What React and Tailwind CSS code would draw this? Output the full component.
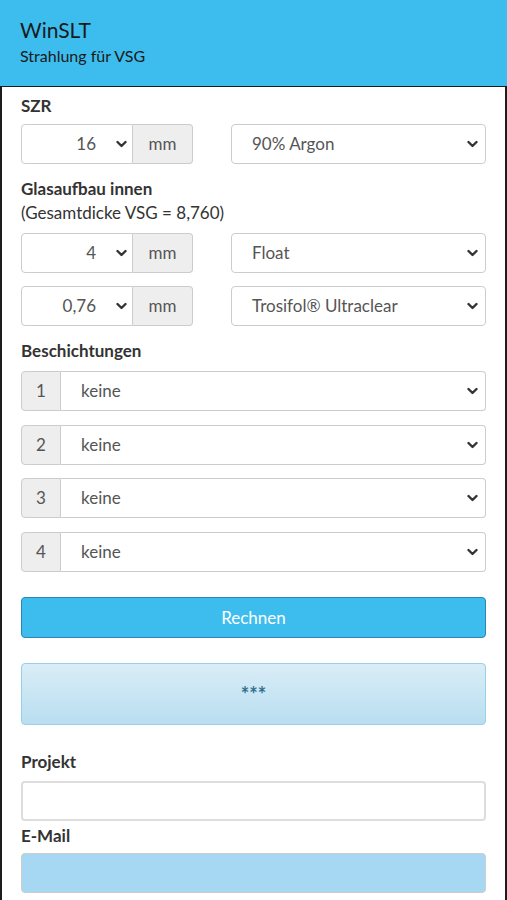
function Chevron() {
	return (
		<svg width="11" height="8" viewBox="0 0 11 8" className="shrink-0">
			<polyline points="1.5,2 5.5,6 9.5,2" fill="none" stroke="#333" strokeWidth="2.4" strokeLinecap="round" strokeLinejoin="round" />
		</svg>
	);
}

function UnitSelect({ value }) {
	return (
		<div className="flex h-10 w-[172px]">
			<div className="flex flex-1 items-center justify-end gap-[20px] pr-[5px] border border-[#ccc] rounded-l-[4px] bg-white">
				<span>{value}</span>
				<Chevron />
			</div>
			<div className="flex w-[60px] items-center justify-center border border-l-0 border-[#ccc] rounded-r-[4px] bg-[#eee]">mm</div>
		</div>
	);
}

function WideSelect({ value }) {
	return (
		<div className="flex h-10 flex-1 items-center justify-between pl-5 pr-[7px] border border-[#ccc] rounded-[4px] bg-white">
			<span>{value}</span>
			<Chevron />
		</div>
	);
}

function CoatingRow({ n }) {
	return (
		<div className="flex h-10">
			<div className="flex w-10 items-center justify-center border border-[#ccc] rounded-l-[4px] bg-[#eee]">{n}</div>
			<div className="flex flex-1 items-center justify-between pl-5 pr-[7px] border border-l-0 border-[#ccc] rounded-r-[4px] bg-white">
				<span>keine</span>
				<Chevron />
			</div>
		</div>
	);
}

export default function App() {
	return (
		<div className="w-[507px] min-h-[900px] bg-white text-[17px] text-[#555]" style={{ fontFamily: 'Lato, "Open Sans", sans-serif' }}>
			<header className="h-[86px] bg-[#3dbdee] px-5 pt-[17px] text-[#1a1a1a]">
				<div className="text-[21px] leading-[26px]">WinSLT</div>
				<div className="mt-[3px] text-[16px] leading-5">Strahlung für VSG</div>
			</header>
			<main className="border-x-2 border-t border-[#1c1c1c] px-[19px] pb-2 min-h-[814px]">
				<div className="pt-[8px] pb-[7px] font-bold text-[17px] leading-[22px] text-[#333]">SZR</div>
				<div className="flex gap-[38px]">
					<UnitSelect value="16" />
					<WideSelect value="90% Argon" />
				</div>
				<div className="pt-[14px] font-bold text-[17px] leading-[22px] text-[#333]">Glasaufbau innen</div>
				<div className="pt-[2px] pb-[9px] text-[17px] leading-[22px] text-[#333]">(Gesamtdicke VSG = 8,760)</div>
				<div className="flex flex-col gap-[13px]">
					<div className="flex gap-[38px]">
						<UnitSelect value="4" />
						<WideSelect value="Float" />
					</div>
					<div className="flex gap-[38px]">
						<UnitSelect value="0,76" />
						<WideSelect value="Trosifol® Ultraclear" />
					</div>
				</div>
				<div className="pt-[14px] pb-[9px] font-bold text-[17px] leading-[22px] text-[#333]">Beschichtungen</div>
				<div className="flex flex-col gap-[13.5px]">
					<CoatingRow n="1" />
					<CoatingRow n="2" />
					<CoatingRow n="3" />
					<CoatingRow n="4" />
				</div>
				<button className="mt-[25.5px] flex h-[41px] w-full items-center justify-center rounded-[4px] border border-[#2b86b5] bg-[#3dbdee] text-white">
					Rechnen
				</button>
				<div className="mt-[25px] flex h-[62px] items-center justify-center rounded-[4px] border border-[#9acfea] bg-gradient-to-b from-[#d9edf7] to-[#b9def0] font-bold text-[#31708f] text-[20px]">
					***
				</div>
				<div className="pt-[26px] pb-[8px] font-bold text-[17px] leading-[22px] text-[#333]">Projekt</div>
				<div className="h-10 rounded-[4px] border-2 border-[#ddd] bg-white"></div>
				<div className="pt-[4px] pb-[6px] font-bold text-[17px] leading-[22px] text-[#333]">E-Mail</div>
				<div className="h-10 rounded-[4px] border border-[#ccc] bg-[#a6d8f3]"></div>
			</main>
		</div>
	);
}
